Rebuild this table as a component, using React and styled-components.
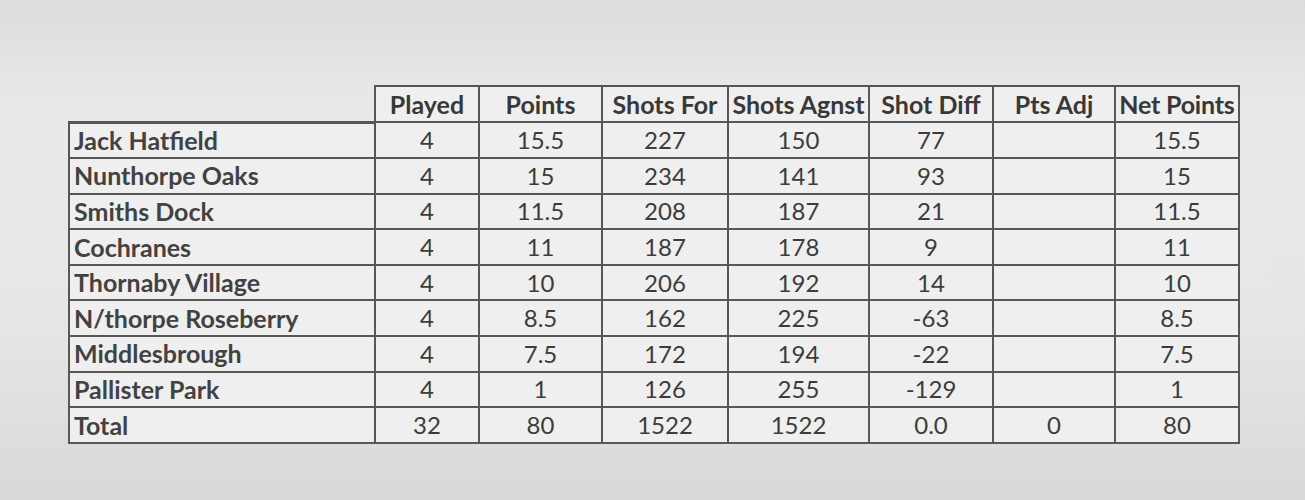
import React from 'react';
import styled, { createGlobalStyle } from 'styled-components';

const GlobalStyle = createGlobalStyle`
  html, body {
    margin: 0;
    padding: 0;
  }
  body {
    width: 1305px;
    height: 500px;
    overflow: hidden;
    background: linear-gradient(180deg, #dcdcdc 0%, #e9e9e9 22%, #e7e7e7 60%, #d9d9d9 100%);
    font-family: Lato, "Liberation Sans", sans-serif;
  }
`;

const columns = [
  { key: 'played', label: 'Played', width: 104 },
  { key: 'points', label: 'Points', width: 123 },
  { key: 'shotsFor', label: 'Shots For', width: 126 },
  { key: 'shotsAgnst', label: 'Shots Agnst', width: 141 },
  { key: 'shotDiff', label: 'Shot Diff', width: 124 },
  { key: 'ptsAdj', label: 'Pts Adj', width: 122 },
  { key: 'netPoints', label: 'Net Points', width: 124 }
];

const teams = [
  { name: 'Jack Hatfield', played: 4, points: '15.5', shotsFor: 227, shotsAgnst: 150, shotDiff: 77, ptsAdj: '', netPoints: '15.5' },
  { name: 'Nunthorpe Oaks', played: 4, points: '15', shotsFor: 234, shotsAgnst: 141, shotDiff: 93, ptsAdj: '', netPoints: '15' },
  { name: 'Smiths Dock', played: 4, points: '11.5', shotsFor: 208, shotsAgnst: 187, shotDiff: 21, ptsAdj: '', netPoints: '11.5' },
  { name: 'Cochranes', played: 4, points: '11', shotsFor: 187, shotsAgnst: 178, shotDiff: 9, ptsAdj: '', netPoints: '11' },
  { name: 'Thornaby Village', played: 4, points: '10', shotsFor: 206, shotsAgnst: 192, shotDiff: 14, ptsAdj: '', netPoints: '10' },
  { name: 'N/thorpe Roseberry', played: 4, points: '8.5', shotsFor: 162, shotsAgnst: 225, shotDiff: -63, ptsAdj: '', netPoints: '8.5' },
  { name: 'Middlesbrough', played: 4, points: '7.5', shotsFor: 172, shotsAgnst: 194, shotDiff: -22, ptsAdj: '', netPoints: '7.5' },
  { name: 'Pallister Park', played: 4, points: '1', shotsFor: 126, shotsAgnst: 255, shotDiff: -129, ptsAdj: '', netPoints: '1' },
  { name: 'Total', played: 32, points: '80', shotsFor: 1522, shotsAgnst: 1522, shotDiff: '0.0', ptsAdj: '0', netPoints: '80' }
];

function App() {
  return (
    <React.Fragment>
      <GlobalStyle />
      <SC.Page>
        <SC.Table>
          <colgroup>
            <col style={{ width: 306 }} />
            {columns.map(col => (
              <col key={col.key} style={{ width: col.width }} />
            ))}
          </colgroup>
          <thead>
            <tr>
              <SC.Corner />
              {columns.map(col => (
                <SC.HeadCell key={col.key} $tight={col.key === 'netPoints'}>
                  {col.label}
                </SC.HeadCell>
              ))}
            </tr>
          </thead>
          <tbody>
            {teams.map(team => (
              <tr key={team.name}>
                <SC.NameCell>{team.name}</SC.NameCell>
                {columns.map(col => (
                  <SC.Cell key={col.key}>{team[col.key]}</SC.Cell>
                ))}
              </tr>
            ))}
          </tbody>
        </SC.Table>
      </SC.Page>
    </React.Fragment>
  );
}

const SC = {
  Page: styled.div`
    padding: 85px 0 0 68px;
  `,
  Table: styled.table`
    border-collapse: collapse;
    table-layout: fixed;
    width: 1170px;
    color: #3b3b3b;
    font-size: 24px;
    line-height: 1;
  `,
  Corner: styled.th`
    border: none;
    border-bottom: 3px solid #575757;
    background: transparent;
  `,
  HeadCell: styled.th`
    height: 34px;
    padding: 0 ${p => (p.$tight ? '0' : '2px')};
    border: 2.5px solid #575757;
    background: #efefef;
    font-size: 25px;
    font-weight: 700;
    text-align: center;
    white-space: nowrap;
    overflow: hidden;
    color: #383838;
    letter-spacing: ${p => (p.$tight ? '-0.2px' : '0')};
  `,
  NameCell: styled.td`
    height: 33.6px;
    padding: 0 4px;
    border: 2.5px solid #575757;
    background: #efefef;
    font-size: 25px;
    font-weight: 700;
    text-align: left;
    white-space: nowrap;
    color: #424242;
  `,
  Cell: styled.td`
    height: 33.6px;
    padding: 0;
    border: 2.5px solid #575757;
    background: #efefef;
    font-weight: 400;
    text-align: center;
    color: #3c3c3c;
  `
};

export default App;
